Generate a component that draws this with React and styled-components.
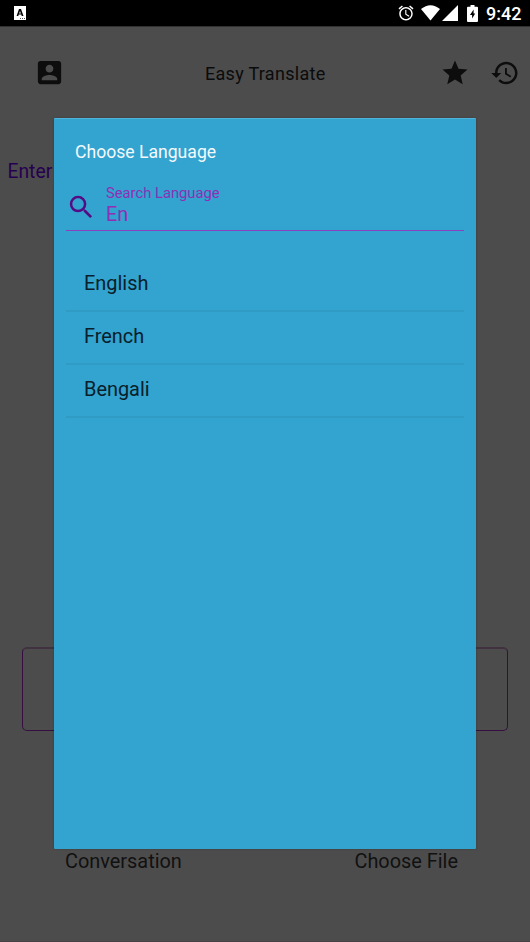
import React from 'react';
import styled, { createGlobalStyle } from 'styled-components';

const GlobalStyle = createGlobalStyle`
  * { box-sizing: border-box; }
  body { margin: 0; background: #4c4c4c; font-family: Roboto, sans-serif; }
`;

const Screen = styled.div`
  position: relative;
  display: flex;
  flex-direction: column;
  width: 530px;
  height: 942px;
  overflow: hidden;
  background: #4c4c4c;
  border-bottom: 1px solid #484248;
`;

const StatusBar = styled.header`
  display: flex;
  align-items: center;
  flex: none;
  height: 27px;
  padding: 0 8.5px 0 14px;
  border-bottom: 1px solid #303030;
  background: #000;
  color: #fff;
`;

const StatusIcons = styled.div`
  display: flex;
  align-items: center;
  margin-left: auto;
`;

const Glyph = styled.svg`
  display: block;
  flex: none;
  width: ${(p) => p.$w}px;
  height: ${(p) => p.$h || p.$w}px;
  margin-left: ${(p) => p.$gap || 0}px;
  fill: ${(p) => p.$color || '#0d0d0d'};
`;

const Clock = styled.time`
  margin-left: 8px;
  padding-top: 2px;
  font-size: 18px;
  font-weight: 500;
  line-height: 24px;
`;

const AppBar = styled.nav`
  display: grid;
  grid-template-columns: 170px 1fr 170px;
  align-items: center;
  flex: none;
  height: 92px;
  padding: 0 10.5px 1px 34px;
`;

const AppTitle = styled.h1`
  margin: 0;
  padding: 2px 0 0 1px;
  font-size: 18px;
  font-weight: 400;
  letter-spacing: 0.3px;
  color: #0b0b0b;
  white-space: nowrap;
`;

const Actions = styled.div`
  display: flex;
  justify-content: flex-end;
`;

const Prompt = styled.p`
  margin: 41px 0 0 7.5px;
  font-size: 19.3px;
  line-height: 24px;
  color: #260050;
`;

const ResultBox = styled.div`
  flex: none;
  width: 486px;
  height: 84px;
  margin: 463px 0 0 22px;
  border: 1px solid #370e40;
  border-top: 2px solid #42323f;
  border-radius: 5px;
`;

const Modes = styled.div`
  display: flex;
  justify-content: space-between;
  margin-top: 119px;
  padding: 0 72px 0 65px;
`;

const Mode = styled.span`
  font-size: 19.9px;
  line-height: 24px;
  color: #111;
`;

const Dialog = styled.section`
  position: absolute;
  left: 54px;
  top: 118px;
  width: 422px;
  height: 731px;
  padding: 0 12px;
  border-radius: 1px;
  border-top: 1px solid #4fb2d8;
  background: #33a3d0;
  box-shadow: 0 0 2px rgba(0, 0, 0, 0.3);
`;

const DialogTitle = styled.h2`
  margin: 0;
  padding: 21px 9px 0;
  font-size: 17.6px;
  font-weight: 400;
  line-height: 24px;
  color: #f4fafc;
`;

const SearchField = styled.label`
  display: flex;
  height: 52px;
  margin-top: 15px;
  border-bottom: 1px solid #8b40bd;
  color: #8f2fb5;
`;

const SearchIconSlot = styled.span`
  width: 40px;
  padding-top: 13px;
`;

const FieldText = styled.span`
  display: flex;
  flex-direction: column;
  padding-top: 5px;
`;

const FieldLabel = styled.span`
  font-size: 14.75px;
  line-height: 18px;
`;

const FieldValue = styled.span`
  font-size: 19.8px;
  line-height: 25px;
`;

const LanguageList = styled.ul`
  margin: 28px 0 0;
  padding: 0;
  list-style: none;
`;

const Language = styled.li`
  height: 53px;
  padding-left: 18px;
  border-bottom: 2px solid #309bc5;
  font-size: 19.9px;
  line-height: 50px;
  color: #09202a;
`;

const languages = ['English', 'French', 'Bengali'];

export default function App() {
  return (
    <Screen>
      <GlobalStyle />
      <StatusBar>
        <Glyph viewBox="0 0 12 14" $w={12} $h={14} $color="#fff">
          <path d="M0 0h12v14H0z" />
          <path d="M5 3h2l2.5 7H7.7l-.4-1.4H4.7L4.3 10H2.6zM6 4.9 5.1 7.4h1.8z" fill="#000" fillRule="evenodd" />
          <path d="M6 12h1v1H6zM8 12h1v1H8zM10 12h1v1h-1z" fill="#555" />
        </Glyph>
        <StatusIcons>
          <Glyph viewBox="0 0 24 24" $w={18} $color="#fff">
            <path d="M22 5.72l-4.6-3.86-1.29 1.53 4.6 3.86L22 5.72zM7.88 3.39L6.6 1.86 2 5.71l1.29 1.53 4.59-3.85zM12.5 8H11v6l4.75 2.85.75-1.23-4-2.37V8zM12 4c-4.97 0-9 4.03-9 9s4.02 9 9 9a9 9 0 0 0 0-18zm0 16c-3.87 0-7-3.13-7-7s3.13-7 7-7 7 3.13 7 7-3.13 7-7 7z" />
          </Glyph>
          <Glyph viewBox="0 0 19 16" $w={19} $h={16} $gap={6} $color="#fff">
            <path d="M9.5 15.5 0 4Q9.5-3.6 19 4z" />
          </Glyph>
          <Glyph viewBox="0 0 16 16" $w={16} $gap={2} $color="#fff">
            <path d="M16 0v16H0z" />
          </Glyph>
          <Glyph viewBox="0 0 11 17" $w={11} $h={17} $gap={9} $color="#fff">
            <path fillRule="evenodd" d="M3.5 0h4v1.7H10q1 0 1 1V16q0 1-1 1H1q-1 0-1-1V2.7q0-1 1-1h2.5zM6.6 4.4 3 10h2.1v3.6l3.1-5.2H6.6z" />
          </Glyph>
          <Clock>9:42</Clock>
        </StatusIcons>
      </StatusBar>

      <AppBar>
        <Glyph viewBox="0 0 24 24" $w={31}>
          <path d="M3 5v14c0 1.1.89 2 2 2h14c1.1 0 2-.9 2-2V5c0-1.1-.9-2-2-2H5c-1.11 0-2 .9-2 2zm12 4c0 1.66-1.34 3-3 3s-3-1.34-3-3 1.34-3 3-3 3 1.34 3 3zm-9 8c0-2 4-3.1 6-3.1s6 1.1 6 3.1v1H6v-1z" />
        </Glyph>
        <AppTitle>Easy Translate</AppTitle>
        <Actions>
          <Glyph viewBox="0 0 24 24" $w={30}>
            <path d="M12 17.27L18.18 21l-1.64-7.03L22 9.24l-7.19-.61L12 2 9.19 8.63 2 9.24l5.46 4.73L5.82 21z" />
          </Glyph>
          <Glyph viewBox="0 0 24 24" $w={30} $gap={19.5}>
            <path d="M13 3c-4.97 0-9 4.03-9 9H1l3.89 3.89.07.14L9 12H6c0-3.87 3.13-7 7-7s7 3.13 7 7-3.13 7-7 7c-1.93 0-3.68-.79-4.94-2.06l-1.42 1.42C8.27 19.99 10.51 21 13 21c4.97 0 9-4.03 9-9s-4.03-9-9-9zm-1 5v5l4.28 2.54.72-1.21-3.5-2.08V8H12z" />
          </Glyph>
        </Actions>
      </AppBar>

      <Prompt>Enter</Prompt>
      <ResultBox />
      <Modes>
        <Mode>Conversation</Mode>
        <Mode>Choose File</Mode>
      </Modes>

      <Dialog>
        <DialogTitle>Choose Language</DialogTitle>
        <SearchField>
          <SearchIconSlot>
            <Glyph viewBox="0 0 24 24" $w={30.5} $color="#550b83">
              <path d="M15.5 14h-.79l-.28-.27A6.47 6.47 0 0 0 16 9.5 6.5 6.5 0 1 0 9.5 16c1.61 0 3.09-.59 4.23-1.57l.27.28v.79l5 4.99L20.49 19l-4.99-5zm-6 0C7.01 14 5 11.99 5 9.5S7.01 5 9.5 5 14 7.01 14 9.5 11.99 14 9.5 14z" />
            </Glyph>
          </SearchIconSlot>
          <FieldText>
            <FieldLabel>Search Language</FieldLabel>
            <FieldValue>En</FieldValue>
          </FieldText>
        </SearchField>
        <LanguageList>
          {languages.map((name) => (
            <Language key={name}>{name}</Language>
          ))}
        </LanguageList>
      </Dialog>
    </Screen>
  );
}
